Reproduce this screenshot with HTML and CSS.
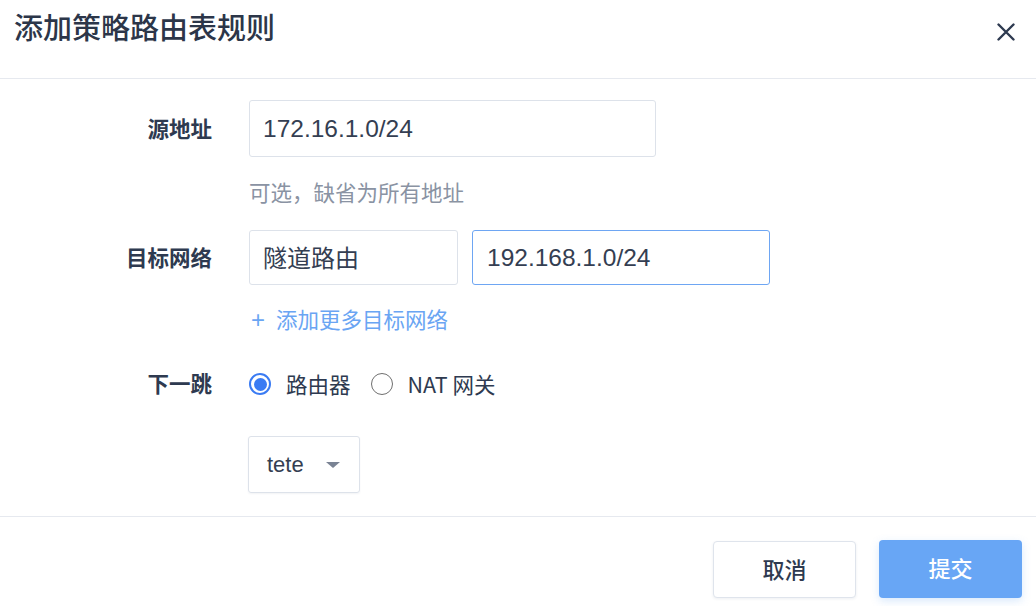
FILE: index.html
```html
<!DOCTYPE html>
<html lang="zh-CN">
<head>
<meta charset="utf-8">
<title>添加策略路由表规则</title>
<link rel="stylesheet" href="styles.css">
</head>
<body>
<div class="dialog">
  <header class="dialog-header">
    <h1 class="dialog-title">添加策略路由表规则</h1>
    <button class="close-btn" aria-label="关闭">
      <svg viewBox="0 0 18 18" width="18" height="18"><path d="M1.5 1.5 L16.5 16.5 M16.5 1.5 L1.5 16.5" stroke="#2e3a50" stroke-width="2.4" stroke-linecap="round" fill="none"/></svg>
    </button>
  </header>

  <main class="dialog-body">
    <div class="form-row">
      <label class="form-label">源地址</label>
      <div class="form-control">
        <div class="input input-src">172.16.1.0/24</div>
      </div>
    </div>
    <div class="hint">可选，缺省为所有地址</div>

    <div class="form-row row-target">
      <label class="form-label">目标网络</label>
      <div class="form-control">
        <div class="input input-type">隧道路由</div>
        <div class="input input-net focused">192.168.1.0/24</div>
      </div>
    </div>
    <div class="add-more"><span class="plus">+</span>添加更多目标网络</div>

    <div class="form-row row-next">
      <label class="form-label">下一跳</label>
      <div class="form-control radios">
        <span class="radio checked"></span><span class="radio-text">路由器</span>
        <span class="radio"></span><span class="radio-text">NAT 网关</span>
      </div>
    </div>

    <div class="select">
      <span class="select-text">tete</span>
      <span class="caret"></span>
    </div>
  </main>

  <footer class="dialog-footer">
    <button class="btn btn-cancel">取消</button>
    <button class="btn btn-submit">提交</button>
  </footer>
</div>
</body>
</html>
```

FILE: styles.css
```css
* { box-sizing: border-box; }
html, body { margin: 0; padding: 0; background: #fff; }
body {
  font-family: "Liberation Sans", "Noto Sans CJK SC", sans-serif;
  color: #2e3a50;
}
.dialog {
  width: 1036px;
  height: 606px;
  display: flex;
  flex-direction: column;
  overflow: hidden;
}
.dialog-header {
  height: 79px;
  border-bottom: 1px solid #e6e9ef;
  display: flex;
  justify-content: space-between;
  align-items: flex-start;
  padding: 8px 21px 0 14px;
}
.dialog-title {
  margin: 0;
  font-size: 29px;
  line-height: 36px;
  font-weight: 500;
  color: #2c3649;
  font-family: "Noto Sans CJK SC", sans-serif;
}
.close-btn {
  margin-top: 15px;
  width: 18px;
  height: 18px;
  padding: 0;
  border: 0;
  background: none;
  display: block;
}
.close-btn svg { display: block; }

.dialog-body {
  flex: 1;
  padding-top: 21px;
  border-bottom: 1px solid #e6e9ef;
}
.form-row {
  display: flex;
  align-items: center;
}
.form-label {
  width: 212px;
  margin-right: 37px;
  padding-bottom: 3px;
  text-align: right;
  font-size: 21.5px;
  font-weight: 600;
  color: #2e3a50;
  font-family: "Noto Sans CJK SC", sans-serif;
}
.form-control {
  display: flex;
  align-items: center;
}
.input {
  height: 57px;
  border: 1.5px solid #dde2ea;
  border-radius: 3px;
  padding-left: 13px;
  display: flex;
  align-items: center;
  font-size: 24.5px;
  color: #343e52;
}
.input-src { width: 407px; }
.input-type { width: 209px; margin-right: 14px; font-family: "Noto Sans CJK SC", sans-serif; font-size: 24px; padding-bottom: 2px; }
.input-net { width: 298px; padding-left: 14px; }
.input.focused { border-color: #6ea6f3; }

.hint {
  margin: 20px 0 0 249px;
  font-size: 21.5px;
  line-height: 30px;
  color: #8a93a3;
  font-family: "Noto Sans CJK SC", sans-serif;
}
.row-target { margin-top: 23px; }
.row-target .input { height: 55px; }

.add-more {
  margin: 19px 0 0 251px;
  font-size: 21.5px;
  line-height: 30px;
  color: #6aa5f3;
  font-family: "Noto Sans CJK SC", sans-serif;
}
.plus {
  font-family: "Liberation Sans", sans-serif;
  font-size: 24px;
  margin-right: 11px;
}

.row-next { margin-top: 34px; height: 30px; }
.radios { font-size: 21.5px; }
.radio {
  width: 22px;
  height: 22px;
  border-radius: 50%;
  border: 1.6px solid #6f6f6f;
  display: inline-block;
  position: relative;
}
.radio.checked {
  border: 2px solid #3a7bf3;
}
.radio.checked::after {
  content: "";
  position: absolute;
  left: 2.5px;
  top: 2.5px;
  width: 13px;
  height: 13px;
  border-radius: 50%;
  background: #3a7bf3;
}
.radio-text {
  margin-left: 15px;
  margin-right: 20px;
  padding-bottom: 2px;
  color: #2e3a50;
  font-family: "Noto Sans CJK SC", sans-serif;
}
.radio-text:last-child { margin-right: 0; }

.select {
  margin: 37px 0 0 248px;
  width: 112px;
  height: 57px;
  border: 1.5px solid #dde2ea;
  border-radius: 3px;
  display: flex;
  align-items: center;
  padding-left: 18px;
  box-shadow: 0 1px 2px rgba(30, 50, 90, 0.06);
}
.select-text {
  font-size: 22px;
  color: #343e52;
}
.caret {
  margin-left: 22px;
  width: 0;
  height: 0;
  border-left: 7px solid transparent;
  border-right: 7px solid transparent;
  border-top: 6px solid #7a8394;
}

.dialog-footer {
  height: 89px;
  display: flex;
  justify-content: flex-end;
  align-items: flex-start;
  padding: 24px 14px 0 0;
  gap: 23px;
}
.btn {
  width: 143px;
  height: 57px;
  padding: 0 0 4px;
  border-radius: 4px;
  font-size: 22px;
  font-family: "Noto Sans CJK SC", sans-serif;
  font-weight: 500;
  cursor: pointer;
}
.btn-cancel {
  background: #fff;
  color: #2e3a50;
  border: 1.5px solid #dfe4ec;
  box-shadow: 0 1px 3px rgba(30, 50, 90, 0.08);
}
.btn-submit {
  background: #68a6f5;
  color: #fff;
  border: 0;
  margin-top: -1px;
  height: 58px;
  box-shadow: 0 3px 8px rgba(104, 166, 245, 0.25);
}
```
